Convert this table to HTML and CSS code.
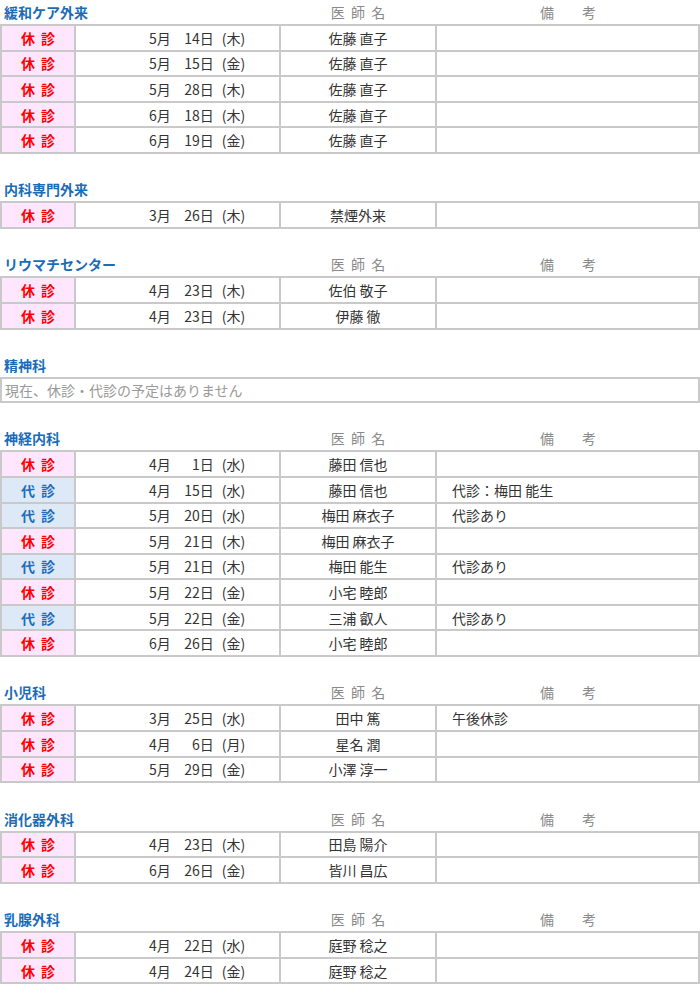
FILE: index.html
```html
<!DOCTYPE html>
<html lang="ja">
<head>
<meta charset="utf-8">
<title>休診・代診のお知らせ</title>
<link rel="stylesheet" href="styles.css">
</head>
<body>

<section class="dept">
  <div class="head"><h2 class="title">緩和ケア外来</h2><span class="label">医 師 名</span><span class="label">備　　考</span></div>
  <div class="tbl">
    <div class="st off">休 診</div><div class="date"><span class="m">5月</span><span class="d">14日</span><span class="w">(木)</span></div><div class="doc">佐藤 直子</div><div class="note"></div>
    <div class="st off">休 診</div><div class="date"><span class="m">5月</span><span class="d">15日</span><span class="w">(金)</span></div><div class="doc">佐藤 直子</div><div class="note"></div>
    <div class="st off">休 診</div><div class="date"><span class="m">5月</span><span class="d">28日</span><span class="w">(木)</span></div><div class="doc">佐藤 直子</div><div class="note"></div>
    <div class="st off">休 診</div><div class="date"><span class="m">6月</span><span class="d">18日</span><span class="w">(木)</span></div><div class="doc">佐藤 直子</div><div class="note"></div>
    <div class="st off">休 診</div><div class="date"><span class="m">6月</span><span class="d">19日</span><span class="w">(金)</span></div><div class="doc">佐藤 直子</div><div class="note"></div>
  </div>
</section>

<section class="dept">
  <div class="head"><h2 class="title">内科専門外来</h2></div>
  <div class="tbl">
    <div class="st off">休 診</div><div class="date"><span class="m">3月</span><span class="d">26日</span><span class="w">(木)</span></div><div class="doc">禁煙外来</div><div class="note"></div>
  </div>
</section>

<section class="dept">
  <div class="head"><h2 class="title">リウマチセンター</h2><span class="label">医 師 名</span><span class="label">備　　考</span></div>
  <div class="tbl">
    <div class="st off">休 診</div><div class="date"><span class="m">4月</span><span class="d">23日</span><span class="w">(木)</span></div><div class="doc">佐伯 敬子</div><div class="note"></div>
    <div class="st off">休 診</div><div class="date"><span class="m">4月</span><span class="d">23日</span><span class="w">(木)</span></div><div class="doc">伊藤 徹</div><div class="note"></div>
  </div>
</section>

<section class="dept">
  <div class="head"><h2 class="title">精神科</h2></div>
  <div class="none">現在、休診・代診の予定はありません</div>
</section>

<section class="dept">
  <div class="head"><h2 class="title">神経内科</h2><span class="label">医 師 名</span><span class="label">備　　考</span></div>
  <div class="tbl">
    <div class="st off">休 診</div><div class="date"><span class="m">4月</span><span class="d">1日</span><span class="w">(水)</span></div><div class="doc">藤田 信也</div><div class="note"></div>
    <div class="st sub">代 診</div><div class="date"><span class="m">4月</span><span class="d">15日</span><span class="w">(水)</span></div><div class="doc">藤田 信也</div><div class="note">代診：梅田 能生</div>
    <div class="st sub">代 診</div><div class="date"><span class="m">5月</span><span class="d">20日</span><span class="w">(水)</span></div><div class="doc">梅田 麻衣子</div><div class="note">代診あり</div>
    <div class="st off">休 診</div><div class="date"><span class="m">5月</span><span class="d">21日</span><span class="w">(木)</span></div><div class="doc">梅田 麻衣子</div><div class="note"></div>
    <div class="st sub">代 診</div><div class="date"><span class="m">5月</span><span class="d">21日</span><span class="w">(木)</span></div><div class="doc">梅田 能生</div><div class="note">代診あり</div>
    <div class="st off">休 診</div><div class="date"><span class="m">5月</span><span class="d">22日</span><span class="w">(金)</span></div><div class="doc">小宅 睦郎</div><div class="note"></div>
    <div class="st sub">代 診</div><div class="date"><span class="m">5月</span><span class="d">22日</span><span class="w">(金)</span></div><div class="doc">三浦 叡人</div><div class="note">代診あり</div>
    <div class="st off">休 診</div><div class="date"><span class="m">6月</span><span class="d">26日</span><span class="w">(金)</span></div><div class="doc">小宅 睦郎</div><div class="note"></div>
  </div>
</section>

<section class="dept">
  <div class="head"><h2 class="title">小児科</h2><span class="label">医 師 名</span><span class="label">備　　考</span></div>
  <div class="tbl">
    <div class="st off">休 診</div><div class="date"><span class="m">3月</span><span class="d">25日</span><span class="w">(水)</span></div><div class="doc">田中 篤</div><div class="note">午後休診</div>
    <div class="st off">休 診</div><div class="date"><span class="m">4月</span><span class="d">6日</span><span class="w">(月)</span></div><div class="doc">星名 潤</div><div class="note"></div>
    <div class="st off">休 診</div><div class="date"><span class="m">5月</span><span class="d">29日</span><span class="w">(金)</span></div><div class="doc">小澤 淳一</div><div class="note"></div>
  </div>
</section>

<section class="dept">
  <div class="head"><h2 class="title">消化器外科</h2><span class="label">医 師 名</span><span class="label">備　　考</span></div>
  <div class="tbl">
    <div class="st off">休 診</div><div class="date"><span class="m">4月</span><span class="d">23日</span><span class="w">(木)</span></div><div class="doc">田島 陽介</div><div class="note"></div>
    <div class="st off">休 診</div><div class="date"><span class="m">6月</span><span class="d">26日</span><span class="w">(金)</span></div><div class="doc">皆川 昌広</div><div class="note"></div>
  </div>
</section>

<section class="dept">
  <div class="head"><h2 class="title">乳腺外科</h2><span class="label">医 師 名</span><span class="label">備　　考</span></div>
  <div class="tbl">
    <div class="st off">休 診</div><div class="date"><span class="m">4月</span><span class="d">22日</span><span class="w">(水)</span></div><div class="doc">庭野 稔之</div><div class="note"></div>
    <div class="st off">休 診</div><div class="date"><span class="m">4月</span><span class="d">24日</span><span class="w">(金)</span></div><div class="doc">庭野 稔之</div><div class="note"></div>
  </div>
</section>

</body>
</html>
```

FILE: styles.css
```css
html, body {
  margin: 0;
  padding: 0;
  background: #fff;
}

body {
  font-family: "Noto Sans CJK JP", "Noto Sans", sans-serif;
  font-size: 14px;
  color: #333;
  width: 700px;
}

.dept {
  margin-bottom: 23.4px;
}

.head {
  display: grid;
  grid-template-columns: 280px 156px 1fr;
  align-items: center;
  height: 24px;
}

.title {
  margin: 0;
  padding-left: 4px;
  font-size: 14px;
  font-weight: bold;
  color: #1b6cb6;
  line-height: 24px;
}

.label {
  text-align: center;
  color: #8a8a8a;
  line-height: 24px;
  word-spacing: 3px;
}

.tbl {
  display: grid;
  grid-template-columns: 74px 205px 156px 1fr;
  border-top: 2px solid #c9c9c9;
  border-left: 2px solid #c9c9c9;
}

.tbl > div {
  box-sizing: border-box;
  height: 25.6px;
  border-right: 2px solid #c9c9c9;
  border-bottom: 2px solid #c9c9c9;
  display: flex;
  align-items: center;
  white-space: nowrap;
}

.st {
  justify-content: center;
  font-weight: bold;
  word-spacing: 3px;
}

.st.off {
  background: #ffe6ff;
  color: #ff0000;
}

.st.sub {
  background: #dde9f6;
  color: #1f6dbb;
}

.date {
  padding-left: 73px;
}

.date .m {
  display: inline-block;
}

.date .d {
  display: inline-block;
  width: 43px;
  text-align: right;
}

.date .w {
  display: inline-block;
  margin-left: 8px;
}

.doc {
  justify-content: center;
}

.note {
  padding-left: 15px;
}

.none {
  box-sizing: border-box;
  height: 26px;
  border: 2px solid #c9c9c9;
  color: #999;
  padding-left: 3px;
  display: flex;
  align-items: center;
}
```
